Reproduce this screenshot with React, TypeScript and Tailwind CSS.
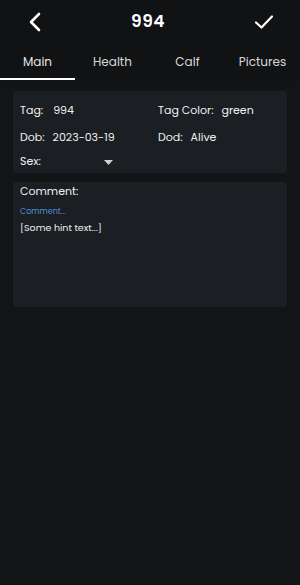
import React from "react";

export default function App() {
  const font = { fontFamily: "Poppins, Inter, 'Noto Sans', sans-serif" };
  return (
    <div className="w-[300px] h-[585px] bg-[#131416] text-white flex flex-col" style={font}>
      <div className="bg-[#111214]">
        <div className="h-[44px] flex items-center justify-between px-[28px]">
          <svg width="14" height="20" viewBox="0 0 14 20" fill="none">
            <path d="M11 2 L3 10 L11 18" stroke="white" strokeWidth="2.6" strokeLinecap="round" strokeLinejoin="round" />
          </svg>
          <span className="text-[17px] font-semibold tracking-[0.5px]">994</span>
          <svg width="20" height="16" viewBox="0 0 20 16" fill="none" className="mr-[-2px]">
            <path d="M2 8.5 L7.5 13.5 L18 2.5" stroke="white" strokeWidth="2.2" strokeLinecap="round" strokeLinejoin="round" />
          </svg>
        </div>
        <div className="grid grid-cols-4 h-[37px] text-[12px] text-[#e5e5e5]">
          <div className="flex flex-col items-center justify-between">
            <span className="mt-[9px]">Main</span>
            <div className="w-full h-[2px] bg-white mb-[1px]" />
          </div>
          <div className="flex justify-center"><span className="mt-[9px] text-[#d8d8d8]">Health</span></div>
          <div className="flex justify-center"><span className="mt-[9px] text-[#d8d8d8]">Calf</span></div>
          <div className="flex justify-center"><span className="mt-[9px] text-[#d8d8d8]">Pictures</span></div>
        </div>
      </div>
      <div className="px-[13px] pt-[10px] flex flex-col gap-[9px]">
        <div className="bg-[#1b1e22] rounded-[4px] h-[82px] px-[7px] pt-[11px] text-[11px] text-[#f0f0f0]">
          <div className="grid grid-cols-[138px_1fr] h-[27px]">
            <div className="flex gap-[10px]"><span>Tag:</span><span>994</span></div>
            <div className="flex gap-[8px]"><span>Tag Color:</span><span>green</span></div>
          </div>
          <div className="grid grid-cols-[138px_1fr] h-[25px]">
            <div className="flex gap-[8px]"><span>Dob:</span><span>2023-03-19</span></div>
            <div className="flex gap-[8px]"><span>Dod:</span><span>Alive</span></div>
          </div>
          <div className="flex items-center h-[14px]">
            <span>Sex:</span>
            <svg width="9" height="5" viewBox="0 0 9 5" className="ml-[63px] mt-[2px]">
              <path d="M0 0 L9 0 L4.5 5 Z" fill="#d0d0d0" />
            </svg>
          </div>
        </div>
        <div className="bg-[#1b1e22] rounded-[4px] h-[125px] px-[7px] pt-[1px]">
          <div className="text-[11px] text-[#f0f0f0] leading-[16px]">Comment:</div>
          <div className="text-[8px] text-[#4f8fd6] mt-[8px] leading-[10px]">Comment...</div>
          <div className="text-[9.5px] text-[#f0f0f0] mt-[4px] leading-[14px]">[Some hint text...]</div>
        </div>
      </div>
    </div>
  );
}
